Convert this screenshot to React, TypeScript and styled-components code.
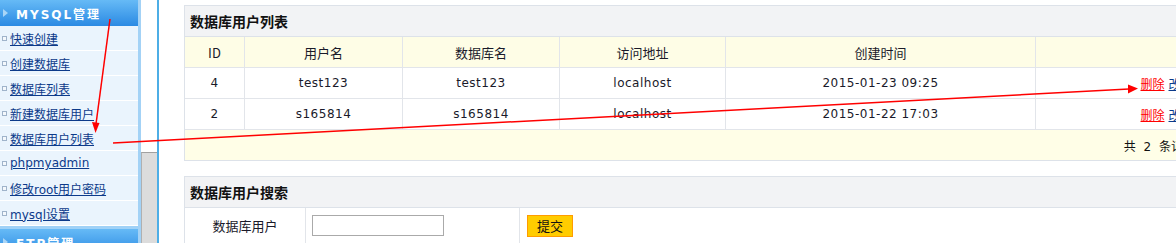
import React from "react";
import styled, { createGlobalStyle } from "styled-components";

const GlobalStyle = createGlobalStyle`
  html, body {
    margin: 0;
    padding: 0;
    background: #ffffff;
    overflow: hidden;
  }
  body {
    font-family: "DejaVu Sans", "Noto Sans CJK SC", sans-serif;
    font-size: 12px;
    color: #222;
  }
  * { box-sizing: border-box; }
`;

const Page = styled.div`
  position: relative;
  display: flex;
  width: 1176px;
  height: 243px;
  overflow: hidden;
`;

const LeftFrame = styled.div`
  display: flex;
  width: 157px;
  flex: none;
  height: 100%;
`;

const Sidebar = styled.nav`
  width: 138px;
  background: #eaf4fd;
  display: flex;
  flex-direction: column;
`;

const MenuHeader = styled.div<{ $topStrip?: boolean }>`
  height: ${(p) => (p.$topStrip ? "29px" : "26px")};
  flex: none;
  display: flex;
  align-items: center;
  padding-left: 3px;
  background: linear-gradient(#66baf6, #2b8ae3);
  border-top: ${(p) => (p.$topStrip ? "3px solid #9fd1f7" : "none")};
  color: #fff;
  font-family: "DejaVu Sans", "Noto Sans CJK SC", sans-serif;
  font-weight: bold;
  font-size: 12px;
  letter-spacing: 2px;
`;

const Triangle = styled.span`
  width: 0;
  height: 0;
  border-left: 5px solid #a9d5f7;
  border-top: 4px solid transparent;
  border-bottom: 4px solid transparent;
  margin-right: 8px;
`;

const MenuItem = styled.div`
  height: 25px;
  flex: none;
  display: flex;
  align-items: center;
  padding-left: 2px;
  border-bottom: 1px solid #ffffff;
`;

const Bullet = styled.span`
  width: 5px;
  height: 5px;
  border: 1px solid #9fb3ca;
  background: #f4f8fc;
  margin-right: 3px;
  flex: none;
`;

const MenuLink = styled.a`
  color: #0c3a8a;
  text-decoration: underline;
  font-size: 12px;
  font-family: "DejaVu Sans", "Noto Sans CJK SC", sans-serif;
  white-space: nowrap;
`;

const SidebarEdge = styled.div`
  width: 3px;
  flex: none;
  background: #a3d2f6;
`;

const Scrollbar = styled.div`
  width: 16px;
  flex: none;
  display: flex;
  flex-direction: column;
  background: #ffffff;
`;

const ScrollTrack = styled.div`
  height: 152px;
  flex: none;
`;

const ScrollThumb = styled.div`
  flex: 1;
  background: #dcdcdc;
  border-top: 1px solid #a0a0a0;
  border-left: 1px solid #b0b0b0;
`;

const FrameDivider = styled.div`
  width: 2px;
  flex: none;
  background: #4eaee6;
`;

const Main = styled.main`
  flex: none;
  padding: 5px 0 0 25px;
  display: flex;
  flex-direction: column;
  gap: 15px;
`;

const Panel = styled.section`
  width: 1126px;
  border: 1px solid #dde2e9;
`;

const PanelTitle = styled.div`
  height: 31px;
  display: flex;
  align-items: center;
  padding-left: 5px;
  background: #f2f3f5;
  border-bottom: 1px solid #dde2e9;
  font-family: "Noto Sans CJK SC", sans-serif;
  font-weight: bold;
  font-size: 14px;
  color: #111;
`;

const Row = styled.div<{ $cols: string; $height: number; $bg?: string; $last?: boolean }>`
  display: grid;
  grid-template-columns: ${(p) => p.$cols};
  height: ${(p) => p.$height}px;
  background: ${(p) => p.$bg || "#ffffff"};
  border-bottom: ${(p) => (p.$last ? "none" : "1px solid #e2e5ea")};
`;

const Cell = styled.div<{ $head?: boolean; $align?: string }>`
  display: flex;
  align-items: center;
  justify-content: ${(p) => p.$align || "center"};
  border-right: 1px solid #e2e5ea;
  font-family: ${(p) =>
    p.$head ? `"Noto Sans CJK SC", sans-serif` : `"DejaVu Sans", "Noto Sans CJK SC", sans-serif`};
  font-size: ${(p) => (p.$head ? "13px" : "12px")};
  letter-spacing: ${(p) => (p.$head ? "0" : "0.5px")};
  color: #1a1a2a;
  white-space: nowrap;
  &:last-child {
    border-right: none;
  }
`;

const FooterRow = styled.div`
  height: 30px;
  background: #fffee7;
  display: flex;
  align-items: center;
  justify-content: flex-end;
  padding-right: 114px;
  font-family: "DejaVu Sans", "Noto Sans CJK SC", sans-serif;
  font-size: 12px;
  word-spacing: 4px;
  color: #111;
`;

const OpLink = styled.a<{ $danger?: boolean }>`
  color: ${(p) => (p.$danger ? "#ff0000" : "#0c3a8a")};
  text-decoration: underline;
  font-family: "Noto Sans CJK SC", sans-serif;
  font-size: 12px;
  letter-spacing: 0;
`;

const OpGap = styled.span`
  display: inline-block;
  width: 4px;
`;

const SearchCellInput = styled(Cell)`
  padding-left: 6px;
`;

const TextInput = styled.input`
  width: 132px;
  height: 21px;
  border: 1px solid #aaaaaa;
  padding: 0 3px;
  margin: 0;
  background: #fff;
`;

const SubmitButton = styled.button`
  width: 46px;
  height: 22px;
  margin: 0 0 0 7px;
  padding: 0;
  background: #ffcc00;
  border: 1px solid #ff9c00;
  font-family: "Noto Sans CJK SC", sans-serif;
  font-size: 13px;
  color: #111;
`;

const Overlay = styled.svg`
  position: absolute;
  left: 0;
  top: 0;
  pointer-events: none;
`;

const menuItems = [
  "快速创建",
  "创建数据库",
  "数据库列表",
  "新建数据库用户",
  "数据库用户列表",
  "phpmyadmin",
  "修改root用户密码",
  "mysql设置",
];

const listCols = "60px 158px 157px 166px 310px 1fr";
const searchCols = "121px 214px 1fr";

const users = [
  { id: "4", name: "test123", db: "test123", host: "localhost", time: "2015-01-23 09:25" },
  { id: "2", name: "s165814", db: "s165814", host: "localhost", time: "2015-01-22 17:03" },
];

export default function App() {
  return (
    <>
      <GlobalStyle />
      <Page>
        <LeftFrame>
          <Sidebar>
            <MenuHeader>
              <Triangle />
              MYSQL管理
            </MenuHeader>
            {menuItems.map((m) => (
              <MenuItem key={m}>
                <Bullet />
                <MenuLink href="#">{m}</MenuLink>
              </MenuItem>
            ))}
            <MenuHeader $topStrip>
              <Triangle />
              FTP管理
            </MenuHeader>
          </Sidebar>
          <SidebarEdge />
          <Scrollbar>
            <ScrollTrack />
            <ScrollThumb />
          </Scrollbar>
        </LeftFrame>
        <FrameDivider />
        <Main>
          <Panel>
            <PanelTitle>数据库用户列表</PanelTitle>
            <Row $cols={listCols} $height={31} $bg="#fefde6">
              <Cell $head>ID</Cell>
              <Cell $head>用户名</Cell>
              <Cell $head>数据库名</Cell>
              <Cell $head>访问地址</Cell>
              <Cell $head>创建时间</Cell>
              <Cell $head />
            </Row>
            {users.map((u) => (
              <Row key={u.id} $cols={listCols} $height={31}>
                <Cell>{u.id}</Cell>
                <Cell>{u.name}</Cell>
                <Cell>{u.db}</Cell>
                <Cell>{u.host}</Cell>
                <Cell>{u.time}</Cell>
                <Cell>
                  <OpLink href="#" $danger>
                    删除
                  </OpLink>
                  <OpGap />
                  <OpLink href="#">改密码</OpLink>
                </Cell>
              </Row>
            ))}
            <FooterRow>共 2 条记录</FooterRow>
          </Panel>
          <Panel>
            <PanelTitle>数据库用户搜索</PanelTitle>
            <Row $cols={searchCols} $height={35} $last>
              <Cell $head>数据库用户</Cell>
              <SearchCellInput $align="flex-start">
                <TextInput type="text" />
              </SearchCellInput>
              <Cell $align="flex-start">
                <SubmitButton type="button">提交</SubmitButton>
              </Cell>
            </Row>
          </Panel>
        </Main>
        <Overlay width="1176" height="243" viewBox="0 0 1176 243">
          <line x1="110" y1="19" x2="96" y2="124" stroke="#ff0000" strokeWidth="1.5" />
          <polygon points="92,122 99.5,123 95.5,133" fill="#ff0000" />
          <line x1="113" y1="143" x2="1129" y2="89" stroke="#ff0000" strokeWidth="1.5" />
          <polygon points="1128,84.5 1128,93.5 1138,88.5" fill="#ff0000" />
        </Overlay>
      </Page>
    </>
  );
}
